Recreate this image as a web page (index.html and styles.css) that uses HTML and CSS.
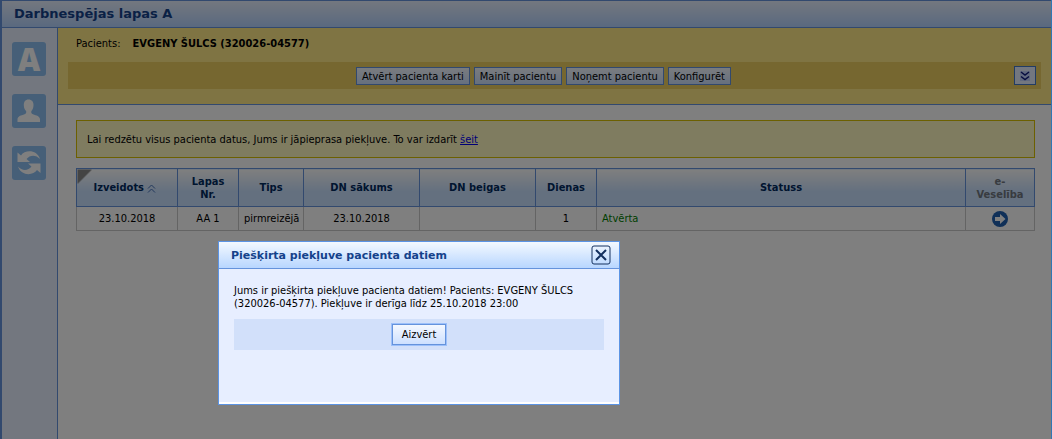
FILE: index.html
```html
<!DOCTYPE html>
<html lang="lv">
<head>
    <meta charset="UTF-8">
    <meta name="viewport" content="width=device-width, initial-scale=1.0">
    <title>Darbnespējas lapas A</title>
    <link rel="stylesheet" href="styles.css">
</head>
<body>
    <div class="page">
        <header class="page-header">
            <h1>Darbnespējas lapas A</h1>
        </header>
        <div class="page-body">
            <nav class="sidebar">
                <a href="#" aria-label="Darbnespējas lapas">
                    <span class="letter">A</span>
                </a>
                <a href="#" aria-label="Pacients">
                    <svg width="34" height="34" viewBox="0 0 34 34">
                        <path d="M16.500 5.500c3.300 0 5.200 2.300 5 5.800-.1 2.700-1 4.700-2.100 5.700-.5 1.600.1 2.600 1.500 3.200 3.600 1.300 7.100 2 7.100 5v2.800H5.500v-2.800c0-3 3.500-3.700 7.100-5 1.400-.6 2-1.600 1.500-3.200-1.300-1-2.200-3-2.300-5.700-.1-3.500 1.500-5.800 4.700-5.800z"/>
                    </svg>
                </a>
                <a href="#" aria-label="Atjaunot">
                    <svg width="34" height="34" viewBox="0 0 34 34">
                        <path d="M5.500 6.500L9 9.500C13 3.500 25 3.500 28 13c-4-4.500-10-4.500-13.500 0l3.500 3H5.500z"/>
                        <path d="M28.500 27L25 24C21 30 9 30 6 20.500c4 4.500 10 4.500 13.500 0l-3.500-3h12.500z"/>
                    </svg>
                </a>
            </nav>
            <main class="content">
                <section class="patient">
                    <p class="patient-info">Pacients: <strong>EVGENY ŠULCS (320026-04577)</strong></p>
                    <div class="toolbar">
                        <div class="toolbar-buttons">
                            <button type="button">Atvērt pacienta karti</button>
                            <button type="button">Mainīt pacientu</button>
                            <button type="button">Noņemt pacientu</button>
                            <button type="button">Konfigurēt</button>
                        </div>
                        <button type="button" class="expand" aria-label="Izvērst">
                            <svg width="10" height="10" viewBox="0 0 10 10">
                                <rect width="10" height="10"/>
                                <path d="M1 1l4 3 4-3M1 5.500l4 3 4-3"/>
                            </svg>
                        </button>
                    </div>
                </section>
                <div class="list">
                    <p class="notice">Lai redzētu visus pacienta datus, Jums ir jāpieprasa piekļuve. To var izdarīt <a href="#">šeit</a></p>
                    <table>
                        <colgroup>
                            <col class="col-created">
                            <col class="col-short">
                            <col class="col-type">
                            <col class="col-date">
                            <col class="col-date">
                            <col class="col-short">
                            <col>
                            <col class="col-ehealth">
                        </colgroup>
                        <thead>
                            <tr>
                                <th class="corner">Izveidots
                                    <svg width="9" height="9" viewBox="0 0 9 9">
                                        <path d="M1 4.500l3.500-3.500 3.500 3.500M1 8.500l3.500-3.500 3.500 3.500"/>
                                    </svg>
                                </th>
                                <th>Lapas Nr.</th>
                                <th>Tips</th>
                                <th>DN sākums</th>
                                <th>DN beigas</th>
                                <th>Dienas</th>
                                <th>Statuss</th>
                                <th class="disabled">e-<br>Veselība</th>
                            </tr>
                        </thead>
                        <tbody>
                            <tr>
                                <td>23.10.2018</td>
                                <td>AA 1</td>
                                <td>pirmreizējā</td>
                                <td>23.10.2018</td>
                                <td></td>
                                <td>1</td>
                                <td class="status">Atvērta</td>
                                <td>
                                    <a href="#" class="go" aria-label="e-Veselība">
                                        <svg width="16" height="16" viewBox="0 0 16 16">
                                            <circle cx="8" cy="8" r="8"/>
                                            <path d="M3 6h5V3l5.500 5L8 13v-3H3z"/>
                                        </svg>
                                    </a>
                                </td>
                            </tr>
                        </tbody>
                    </table>
                </div>
            </main>
        </div>
    </div>

    <div class="overlay"></div>

    <div class="dialog" role="dialog" aria-labelledby="dialog-title">
        <div class="dialog-header">
            <h2 id="dialog-title">Piešķirta piekļuve pacienta datiem</h2>
            <button type="button" class="close" aria-label="Aizvērt logu">
                <svg width="20" height="20" viewBox="0 0 20 20">
                    <rect x="1" y="1" width="18" height="18" rx="2"/>
                    <path d="M5 5l10 10M15 5L5 15"/>
                </svg>
            </button>
        </div>
        <div class="dialog-body">
            <p>Jums ir piešķirta piekļuve pacienta datiem! Pacients: EVGENY ŠULCS (320026-04577). Piekļuve ir derīga līdz 25.10.2018 23:00</p>
            <div class="dialog-actions">
                <button type="button">Aizvērt</button>
            </div>
        </div>
    </div>
</body>
</html>
```
FILE: styles.css
```css
* {
    box-sizing: border-box;
}
body {
    margin: 0;
    font-family: Tahoma, "DejaVu Sans Condensed", "Noto Sans", sans-serif;
    font-size: 11px;
    line-height: 13px;
    color: #000;
    background-color: #fff;
}
h1, h2, p {
    margin: 0;
}
button {
    font-family: inherit;
    font-size: 11px;
    line-height: 13px;
    color: #000;
    padding: 1px 5px;
    border: 1px solid #6593dc;
    background: linear-gradient(#f4f8ff, #cde0ff);
    cursor: pointer;
}

/* page */
.page {
    display: flex;
    flex-direction: column;
    min-height: 100vh;
    border: 1px solid #6593dc;
    border-left-width: 2px;
    border-bottom: none;
}
.page-header {
    padding: 4px 12px 5px;
    border-bottom: 1px solid #6593dc;
    background: linear-gradient(#e8f0ff, #b4d2ff);
}
.page-header h1 {
    font-family: Verdana, "DejaVu Sans", sans-serif;
    font-size: 13px;
    line-height: 17px;
    color: #15428b;
}
.page-body {
    display: flex;
    flex: 1;
}

/* sidebar */
.sidebar {
    display: flex;
    flex-direction: column;
    gap: 18px;
    width: 56px;
    padding: 14px 10px;
    border-right: 1px solid #6593dc;
    background-color: #e7eeff;
}
.sidebar a {
    display: flex;
    justify-content: center;
    align-items: center;
    width: 34px;
    height: 34px;
    border-radius: 3px;
    background-color: #8cbff0;
    color: #fff;
    text-decoration: none;
}
.sidebar svg {
    fill: #fff;
}
.letter {
    font-family: "Open Sans", sans-serif;
    font-size: 31px;
    font-weight: 800;
    line-height: 32px;
}

/* patient */
.content {
    flex: 1;
}
.patient {
    padding: 9px 10px 15px;
    border-bottom: 1px solid #6593dc;
    background-color: #ffe886;
}
.patient-info {
    padding: 0 8px;
    margin-bottom: 12px;
}
.patient-info strong {
    margin-left: 9px;
}
.toolbar {
    display: flex;
    align-items: center;
    padding: 4px 5px;
    background-color: #ecce60;
}
.toolbar-buttons {
    display: flex;
    flex: 1;
    justify-content: center;
    gap: 4px;
}
.toolbar-buttons button {
    padding: 2px 5px 1px;
}
.expand {
    display: flex;
    justify-content: center;
    align-items: center;
    width: 22px;
    height: 19px;
    padding: 0;
    background: #e7eeff;
    border-color: #4478c8;
}
.expand svg {
    fill: none;
    stroke: #101c80;
    stroke-width: 1.5;
}
.expand rect {
    fill: #c4d4ff;
    stroke: none;
}

/* list */
.list {
    padding: 15px 16px 15px 18px;
}
.notice {
    padding: 12px 10px 11px;
    margin-bottom: 10px;
    border: 1px solid #d8c000;
    background-color: #fff8c0;
}
.notice a {
    color: #0000ee;
}
table {
    width: 100%;
    table-layout: fixed;
    border-collapse: collapse;
}
.col-created { width: 101px; }
.col-short { width: 61px; }
.col-type { width: 65px; }
.col-date { width: 116px; }
.col-ehealth { width: 69px; }
th {
    height: 38px;
    padding: 0 8px;
    border: 1px solid #6593dc;
    background: linear-gradient(#fff, #c8e0ff 60%);
    color: #002a5f;
}
th svg {
    vertical-align: -2px;
    fill: none;
    stroke: #4470b8;
}
th.corner {
    padding: 0 10px 0 6px;
    background: linear-gradient(135deg, #888 10px, transparent 10px), linear-gradient(#fff, #c8e0ff 60%);
}
th.disabled {
    color: #707780;
}
td {
    height: 24px;
    padding: 0 5px;
    border: 1px solid #c8c8c8;
    text-align: center;
}
td.status {
    text-align: left;
    color: #008000;
}
.go svg {
    display: block;
    margin: 0 auto;
    fill: #2060b0;
}
.go path {
    fill: #fff;
}

/* dialog */
.overlay {
    position: fixed;
    top: 0;
    right: 0;
    bottom: 0;
    left: 0;
    border-right: 1px solid #2f78b4;
    background-color: rgba(0, 0, 0, 0.5);
}
.dialog {
    position: absolute;
    top: 241px;
    left: 218px;
    width: 402px;
    min-height: 164px;
    display: flex;
    flex-direction: column;
    padding-bottom: 2px;
    border: 1px solid #5c94e4;
    background-color: #fff;
}
.dialog-header {
    display: flex;
    justify-content: space-between;
    align-items: center;
    padding: 3px 8px 3px 12px;
    border-bottom: 1px solid #6593dc;
    background: linear-gradient(#f4f9ff, #b8d6ff);
}
.dialog-header h2 {
    font-family: Verdana, "DejaVu Sans", sans-serif;
    font-size: 11px;
    color: #15428b;
}
.close {
    padding: 0;
    border: none;
    background: none;
}
.close svg {
    display: block;
    fill: none;
    stroke: #14305f;
    stroke-width: 2;
}
.close rect {
    stroke-width: 1;
}
.dialog-body {
    flex: 1;
    padding: 15px;
    background-color: #e7eeff;
}
.dialog-actions {
    display: flex;
    justify-content: center;
    margin-top: 9px;
    padding: 5px;
    background-color: #d2e0fa;
}
.dialog-actions button {
    padding: 3px 9px;
    box-shadow: 0 0 0 1px #9cc0fa;
}
```
